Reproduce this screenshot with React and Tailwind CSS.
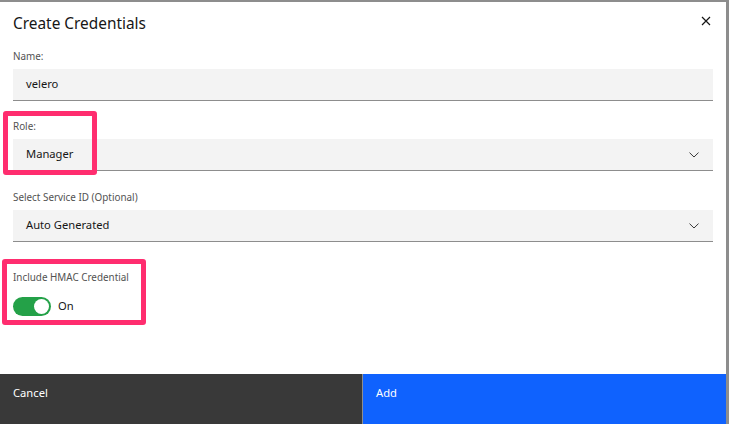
import React from "react";

function Chevron() {
  return (
    <svg width="10" height="6" viewBox="0 0 10 6" className="absolute right-[14px] top-1/2 -translate-y-1/2">
      <path d="M0.5 0.6 L5 5 L9.5 0.6" fill="none" stroke="#393939" strokeWidth="1" />
    </svg>
  );
}

function Label({ children, className = "" }) {
  return <div className={`text-[9.9px] leading-[12px] text-[#525252] ${className}`}>{children}</div>;
}

export default function App() {
  return (
    <div
      className="relative w-[729px] h-[424px] bg-white border-t-2 border-r-[3px] border-[#8d8d8d] flex flex-col overflow-hidden"
      style={{ fontFamily: '"Noto Sans", "Open Sans", sans-serif' }}
    >
      <div className="relative pt-[12px] px-[13px]">
        <div className="text-[15.4px] leading-[20px] text-[#161616]">Create Credentials</div>
        <svg width="10" height="10" viewBox="0 0 10 10" className="absolute right-[15px] top-[14px]">
          <path d="M1 1 L9 9 M9 1 L1 9" stroke="#161616" strokeWidth="1.2" />
        </svg>
      </div>

      <div className="px-[13px]">
        <Label className="mt-[16px]">Name:</Label>
        <div className="mt-[7px] h-[32px] bg-[#f3f3f3] border-b border-[#8d8d8d] flex items-center pl-[13px] text-[11.2px] text-[#161616]">
          velero
        </div>

        <Label className="mt-[19px]">Role:</Label>
        <div className="relative mt-[7px] h-[32px] bg-[#f3f3f3] border-b border-[#8d8d8d] flex items-center pl-[13px] text-[11.2px] text-[#161616]">
          Manager
          <Chevron />
        </div>

        <Label className="mt-[20px]">Select Service ID (Optional)</Label>
        <div className="relative mt-[7px] h-[32px] bg-[#f3f3f3] border-b border-[#8d8d8d] flex items-center pl-[13px] text-[11.2px] text-[#161616]">
          Auto Generated
          <Chevron />
        </div>

        <Label className="mt-[29px]">Include HMAC Credential</Label>
        <div className="mt-[14px] flex items-center gap-[7px]">
          <div className="relative w-[38px] h-[19px] rounded-full bg-[#24a148]">
            <div className="absolute right-[2px] top-[2px] w-[15px] h-[15px] rounded-full bg-white" />
          </div>
          <span className="text-[11.2px] text-[#161616]">On</span>
        </div>
      </div>

      <div className="mt-auto flex h-[50px]">
        <div className="w-[363px] bg-[#393939] border-r border-[#8d8d8d] pl-[13px] pt-[11px] text-[11.2px] text-white">
          Cancel
        </div>
        <div className="flex-1 bg-[#0f62fe] pl-[13px] pt-[11px] text-[11.2px] text-white">Add</div>
      </div>

      <div className="absolute left-[3px] top-[109px] w-[94px] h-[64px] border-[5px] border-[#ff2d6f] rounded-[3px]" />
      <div className="absolute left-[2px] top-[257px] w-[144px] h-[66px] border-[5px] border-[#ff2d6f] rounded-[3px]" />
    </div>
  );
}
